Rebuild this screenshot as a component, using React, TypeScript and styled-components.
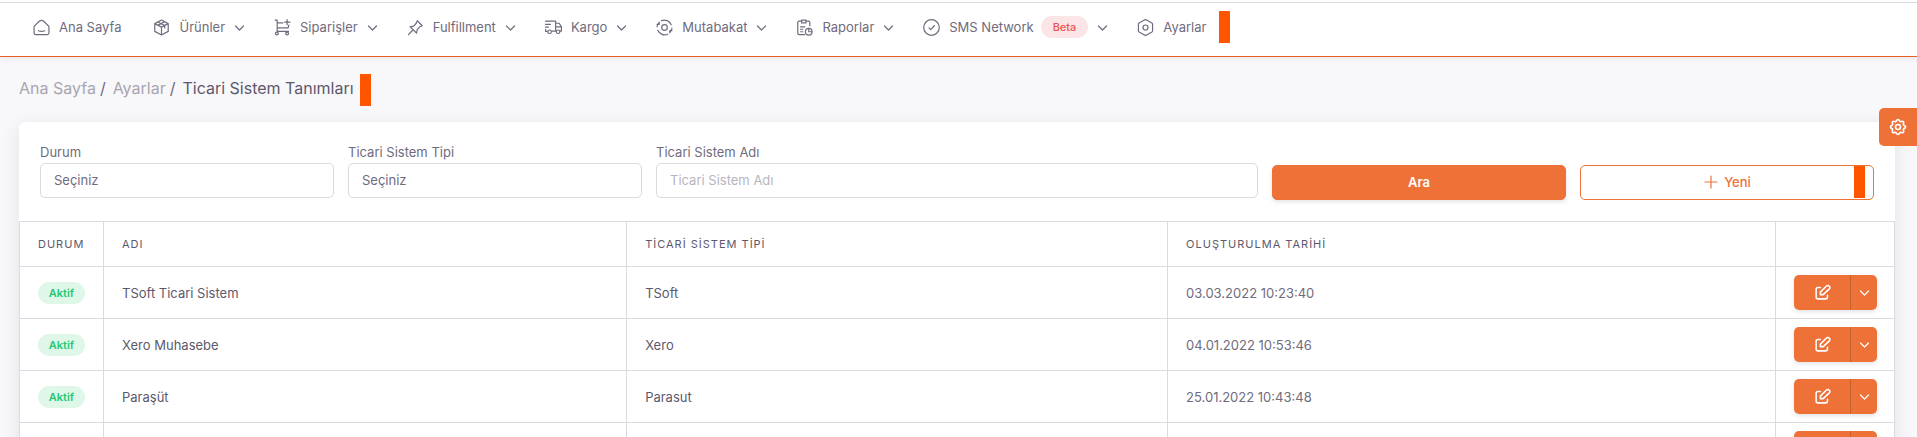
import React from "react";
import styled, { createGlobalStyle } from "styled-components";

const orange = "#ee7137";
const line = "#dbdade";
const text = "#6f6b7d";
const dark = "#5d596c";

const GlobalStyle = createGlobalStyle`
  *, *::before, *::after { box-sizing: border-box; }
  body {
    margin: 0;
    background: #f8f7fa;
    color: ${text};
    font: 13px/20px Inter, "Liberation Sans", sans-serif;
    overflow-x: hidden;
  }
  html { scrollbar-width: none; }
  button, input, select { font: inherit; }
`;

const Header = styled.header`
  border-bottom: 1px solid #ea6022;
  background: #fff;
  padding-top: 2px;
  box-shadow: 0 1px 6px rgba(75, 70, 92, 0.1);
`;

const Nav = styled.nav`
  display: flex;
  align-items: center;
  gap: 29px;
  height: 54px;
  padding: 0 33px 5px;
  border-top: 1px solid ${line};
`;

const NavLink = styled.a<{ $plain?: boolean }>`
  display: flex;
  align-items: center;
  gap: 9px;
  padding-right: ${(p) => (p.$plain ? 3 : 0)}px;
  color: ${text};
  text-decoration: none;
  white-space: nowrap;
`;

const Icon = styled.svg<{ $size?: number; $weight?: number }>`
  flex: none;
  width: ${(p) => p.$size ?? 17}px;
  height: ${(p) => p.$size ?? 17}px;
  fill: none;
  stroke: currentColor;
  stroke-width: ${(p) => p.$weight ?? 1.7};
  stroke-linecap: round;
  stroke-linejoin: round;
`;

const Marker = styled.span`
  width: 11px;
  height: 32px;
  background: #ff5500;
`;

const NavMarker = styled(Marker)`
  margin-left: -19px;
`;

const BetaBadge = styled.span`
  margin-left: -2px;
  padding: 1px 12px;
  border-radius: 11px;
  background: #fce5e6;
  color: #ea5455;
  font-size: 11px;
  font-weight: 500;
`;

const Page = styled.main`
  padding: 0 22px 0 19px;
`;

const Breadcrumb = styled.nav`
  display: flex;
  align-items: center;
  gap: 6px;
  height: 65px;
`;

const Trail = styled.div`
  display: flex;
  gap: 7px;
  padding-bottom: 4px;
  font-size: 16px;
  line-height: 24px;
`;

const CrumbItem = styled.span`
  display: flex;
  gap: 4px;
`;

const Crumb = styled.a`
  color: #a8a5b0;
  text-decoration: none;
`;

const Current = styled.span`
  color: ${dark};
`;

const Card = styled.section`
  border-radius: 6px;
  background: #fff;
  box-shadow: 0 4px 18px rgba(75, 70, 92, 0.12);
`;

const Filters = styled.form`
  display: grid;
  grid-template-columns: repeat(6, 1fr);
  gap: 14px;
  padding: 20px 21px 21px;
`;

const Field = styled.div<{ $span?: number }>`
  grid-column: span ${(p) => p.$span ?? 1};
  display: flex;
  flex-direction: column;
  gap: 1px;
  padding-bottom: 2px;
`;

const control = `
  width: 100%;
  height: 35px;
  padding: 0 13px 2px;
  border: 1px solid ${line};
  border-radius: 5px;
  background: #fff;
  color: ${text};
  appearance: none;
`;

const Select = styled.select`
  ${control}
`;

const Input = styled.input`
  ${control}
  &::placeholder { color: #b7b5be; opacity: 1; }
`;

const Button = styled.button<{ $outline?: boolean }>`
  display: flex;
  align-items: center;
  justify-content: center;
  gap: 5px;
  align-self: end;
  height: 35px;
  padding: 0 0 1px;
  border: 1px solid ${orange};
  border-radius: 5px;
  background: ${(p) => (p.$outline ? "#fff" : orange)};
  box-shadow: ${(p) => (p.$outline ? "none" : "0 2px 4px rgba(165, 163, 174, 0.3)")};
  color: ${(p) => (p.$outline ? orange : "#fff")};
  font-weight: ${(p) => (p.$outline ? 500 : 600)};
  position: relative;
`;

const ButtonMarker = styled(Marker)`
  position: absolute;
  top: 0;
  right: 8px;
`;

const Table = styled.table`
  width: 100%;
  border-collapse: collapse;
  table-layout: fixed;
`;

const Col = styled.col<{ $width?: string }>`
  width: ${(p) => p.$width ?? "auto"};
`;

const HeadCell = styled.th`
  height: 45px;
  padding: 0 18px;
  border: 1px solid ${line};
  color: ${dark};
  font-size: 11px;
  font-weight: 400;
  letter-spacing: 1px;
  text-align: left;
  white-space: nowrap;
`;

const Cell = styled.td<{ $muted?: boolean }>`
  height: 52px;
  padding: 0 17px 0 18px;
  border: 1px solid ${line};
  color: ${(p) => (p.$muted ? text : dark)};
`;

const Status = styled.span`
  display: block;
  width: 47px;
  border-radius: 11px;
  background: #dff7e9;
  color: #28c76f;
  font-size: 11px;
  font-weight: 600;
  line-height: 22px;
  text-align: center;
`;

const Actions = styled.div`
  display: flex;
  height: 35px;
  border-radius: 5px;
  box-shadow: 0 2px 4px rgba(165, 163, 174, 0.3);
  overflow: hidden;
`;

const ActionButton = styled.button<{ $narrow?: boolean }>`
  display: flex;
  align-items: center;
  justify-content: center;
  flex: ${(p) => (p.$narrow ? "0 0 27px" : "1")};
  padding: 0;
  border: 0;
  border-left: ${(p) => (p.$narrow ? "1px solid #c6602f" : "0")};
  background: ${orange};
  color: #fff;
`;

const SettingsButton = styled.button`
  position: fixed;
  top: 108px;
  right: 0;
  display: flex;
  align-items: center;
  justify-content: center;
  width: 38px;
  height: 38px;
  padding: 0;
  border: 0;
  border-radius: 5px 0 0 5px;
  background: ${orange};
  color: #fff;
`;

const Chevron = () => (
  <Icon viewBox="0 0 11 11" $size={11} $weight={1.2} aria-hidden>
    <path d="M1.500 4l4 4 4-4" />
  </Icon>
);

const icons: Record<string, React.ReactNode> = {
  home: <path d="M1.500 10.500 8.500 3.500Q12 0.500 15.500 3.500L22.500 10.500V19.500Q22.500 22 20 22H4Q1.500 22 1.500 19.500ZM7.500 16.500q4.500 2 9 0" />,
  box: <path d="M12 1.500 21.500 6.500v11L12 22.500 2.500 17.500v-11ZM2.500 6.500 12 11.500l9.500-5M12 11.500v11M7 4.200l9.500 5v3.500M7 9l9-5" />,
  cart: (
    <>
      <path d="M1.500 1.500h3v16.500M4.500 5.500h8M5 12.500h15l1-4M4.500 17.500h16M18.500 1v7M15 4.500h7.500" />
      <circle cx="4" cy="20.500" r="2" />
      <circle cx="18.500" cy="20.500" r="2" />
    </>
  ),
  pin: <path d="M14.500 2.500 21.500 9.500 18 11l-3.500 4-1 5L4.500 11l5-1L13 6ZM8.500 15.500l-6.500 6.500" />,
  truck: (
    <>
      <path d="M.8 3h14.200v14H10M.8 7.500h7M.8 11.500h4M.8 14.500v3h2.500M15 6h5l3.200 5v6h-1.700M15 11h8" />
      <circle cx="6.500" cy="18" r="2.500" />
      <circle cx="18.500" cy="18" r="2.500" />
    </>
  ),
  sync: (
    <>
      <path d="M1.500 11A10.500 10.500 0 0 1 4 5.500M7.500 2.500A10.500 10.500 0 0 1 21.500 8M22.500 13A10.500 10.500 0 0 1 20 18.500M16.500 21.500A10.500 10.500 0 0 1 2.500 16M1.500 7.500h3v-3M22.500 16.500h-3v3" />
      <circle cx="12" cy="12" r="4" />
    </>
  ),
  report: (
    <>
      <path d="M7 3H4.500Q2.500 3 2.500 5v15q0 2 2 2H12M15 3h2.500q2 0 2 2v4.500M8 1.500h6v4H8ZM6.500 11h6M6.500 14.500h3M6.500 18h3" />
      <circle cx="18" cy="18" r="4.700" />
      <path d="M18 13.500V18h4.500" />
    </>
  ),
  check: (
    <>
      <circle cx="12" cy="12" r="11" />
      <path d="m8.500 12.500 2.500 2.500 5-5.500" />
    </>
  ),
  hex: (
    <>
      <path d="M11 1.200q1-.5 2 0l8 4.500q1 .6 1 1.700v9.200q0 1.100-1 1.700l-8 4.500q-1 .5-2 0l-8-4.500q-1-.6-1-1.700v-9.200q0-1.100 1-1.700Z" />
      <circle cx="12" cy="12" r="3.500" />
    </>
  ),
};

const menu = [
  { icon: "home", label: "Ana Sayfa", open: false },
  { icon: "box", label: "Ürünler", open: true },
  { icon: "cart", label: "Siparişler", open: true },
  { icon: "pin", label: "Fulfillment", open: true },
  { icon: "truck", label: "Kargo", open: true },
  { icon: "sync", label: "Mutabakat", open: true },
  { icon: "report", label: "Raporlar", open: true },
  { icon: "check", label: "SMS Network", open: true, beta: true },
  { icon: "hex", label: "Ayarlar", open: false },
];

const systems = [
  { name: "TSoft Ticari Sistem", type: "TSoft", date: "03.03.2022 10:23:40" },
  { name: "Xero Muhasebe", type: "Xero", date: "04.01.2022 10:53:46" },
  { name: "Paraşüt", type: "Parasut", date: "25.01.2022 10:43:48" },
  { name: "", type: "", date: "" },
];

export default function App() {
  return (
    <>
      <GlobalStyle />
      <Header>
        <Nav>
          {menu.map((m) => (
            <NavLink href="#" key={m.label} $plain={!m.open}>
              <Icon viewBox="0 0 24 24" aria-hidden>{icons[m.icon]}</Icon>
              {m.label}
              {m.beta && <BetaBadge>Beta</BetaBadge>}
              {m.open && <Chevron />}
            </NavLink>
          ))}
          <NavMarker />
        </Nav>
      </Header>
      <Page>
        <Breadcrumb>
          <Trail>
            <CrumbItem><Crumb href="#">Ana Sayfa</Crumb>/</CrumbItem>
            <CrumbItem><Crumb href="#">Ayarlar</Crumb>/</CrumbItem>
            <Current>Ticari Sistem Tanımları</Current>
          </Trail>
          <Marker />
        </Breadcrumb>
        <Card>
          <Filters onSubmit={(e) => e.preventDefault()}>
            <Field>
              <label htmlFor="status">Durum</label>
              <Select id="status"><option>Seçiniz</option></Select>
            </Field>
            <Field>
              <label htmlFor="type">Ticari Sistem Tipi</label>
              <Select id="type"><option>Seçiniz</option></Select>
            </Field>
            <Field $span={2}>
              <label htmlFor="name">Ticari Sistem Adı</label>
              <Input id="name" placeholder="Ticari Sistem Adı" />
            </Field>
            <Button type="submit">Ara</Button>
            <Button type="button" $outline>
              <Icon viewBox="0 0 24 24" $size={16} $weight={1.8} aria-hidden>
                <path d="M12 3v18M3 12h18" />
              </Icon>
              Yeni
              <ButtonMarker />
            </Button>
          </Filters>
          <Table>
            <colgroup>
              <Col $width="84px" />
              <Col $width="27.9%" />
              <Col $width="28.85%" />
              <Col />
              <Col $width="119px" />
            </colgroup>
            <thead>
              <tr>
                <HeadCell>DURUM</HeadCell>
                <HeadCell>ADI</HeadCell>
                <HeadCell>TİCARİ SİSTEM TİPİ</HeadCell>
                <HeadCell>OLUŞTURULMA TARİHİ</HeadCell>
                <HeadCell />
              </tr>
            </thead>
            <tbody>
              {systems.map((s, i) => (
                <tr key={i}>
                  <Cell>{s.name && <Status>Aktif</Status>}</Cell>
                  <Cell>{s.name}</Cell>
                  <Cell>{s.type}</Cell>
                  <Cell $muted>{s.date}</Cell>
                  <Cell>
                    <Actions>
                      <ActionButton type="button" aria-label="Düzenle">
                        <Icon viewBox="0 0 24 24" $weight={2.2} aria-hidden>
                          <path d="M9 5H5.500Q3 5 3 7.500v11Q3 21 5.500 21h11q2.500 0 2.500-2.500V16M9 15v-3.500l9-9q2-1 3.500.5t.5 3.500l-9 8.500Z" />
                        </Icon>
                      </ActionButton>
                      <ActionButton type="button" $narrow aria-label="Diğer işlemler">
                        <Chevron />
                      </ActionButton>
                    </Actions>
                  </Cell>
                </tr>
              ))}
            </tbody>
          </Table>
        </Card>
      </Page>
      <SettingsButton type="button" aria-label="Ayarlar">
        <Icon viewBox="0 0 24 24" $size={20} $weight={2} aria-hidden>
          <path d="M10.325 4.317c.426-1.756 2.924-1.756 3.350 0a1.724 1.724 0 0 0 2.573 1.066c1.543-.94 3.310.826 2.370 2.370a1.724 1.724 0 0 0 1.065 2.572c1.756.426 1.756 2.924 0 3.350a1.724 1.724 0 0 0-1.066 2.573c.94 1.543-.826 3.310-2.370 2.370a1.724 1.724 0 0 0-2.572 1.065c-.426 1.756-2.924 1.756-3.350 0a1.724 1.724 0 0 0-2.573-1.066c-1.543.94-3.310-.826-2.370-2.370a1.724 1.724 0 0 0-1.065-2.572c-1.756-.426-1.756-2.924 0-3.350a1.724 1.724 0 0 0 1.066-2.573c-.94-1.543.826-3.310 2.370-2.370 1 .608 2.296.07 2.572-1.065Z" />
          <circle cx="12" cy="12" r="3" />
        </Icon>
      </SettingsButton>
    </>
  );
}
